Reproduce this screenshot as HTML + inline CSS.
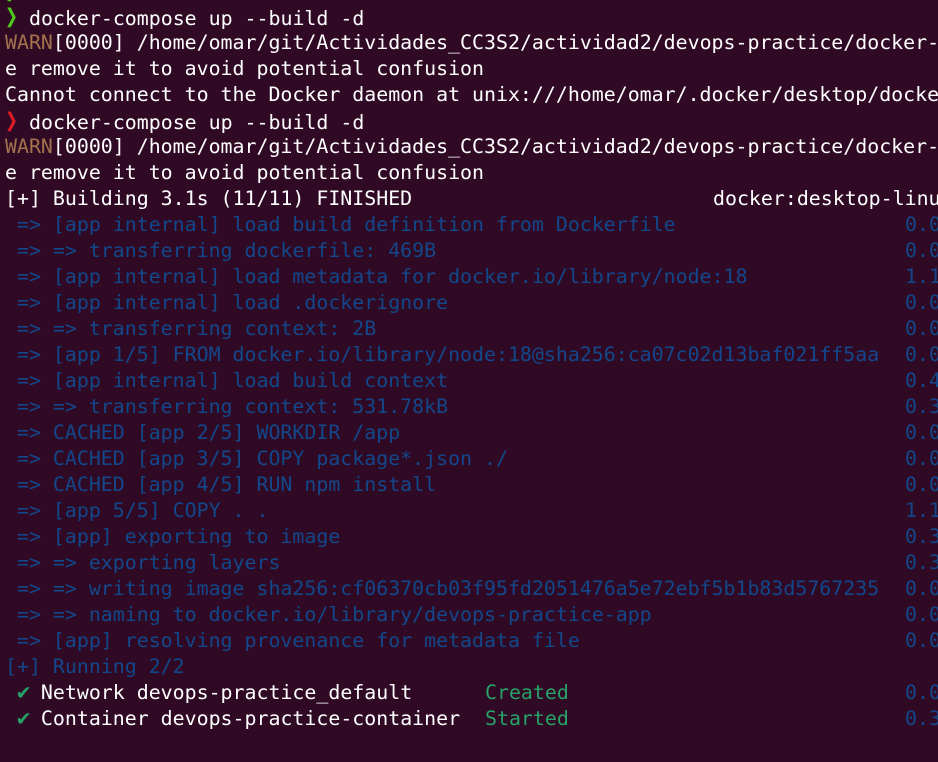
<!DOCTYPE html>
<html><head><meta charset="utf-8"><style>
html,body{margin:0;padding:0;background:#300a24;width:938px;height:762px;overflow:hidden}
.t{position:absolute;left:5px;top:-22px;font-family:"DejaVu Sans Mono","Liberation Mono",monospace;font-size:19.9px;line-height:26px;color:#ffffff}
.l{position:relative;height:26px;white-space:pre}
.r{position:absolute;left:900px}
.b{color:#12488b}
.w{color:#a2734c}
.g{color:#26a269}
.ck{color:#26a269;font-size:22px;font-weight:bold}
.pg,.pr{display:inline-block;width:24px;font-size:27px;font-weight:bold;line-height:26px;transform:scaleX(0.8);transform-origin:left}
.pg{color:#4ec81a}
.pr{color:#e01b24}
</style></head><body>
<div class="t"><div class="l"><span class="pg">❯</span></div><div class="l"><span class="pg">❯</span>docker-compose up --build -d</div><div class="l"><span class="w">WARN</span>[0000] /home/omar/git/Actividades_CC3S2/actividad2/devops-practice/docker-</div><div class="l">e remove it to avoid potential confusion</div><div class="l">Cannot connect to the Docker daemon at unix:///home/omar/.docker/desktop/docke</div><div class="l"><span class="pr">❯</span>docker-compose up --build -d</div><div class="l"><span class="w">WARN</span>[0000] /home/omar/git/Actividades_CC3S2/actividad2/devops-practice/docker-</div><div class="l">e remove it to avoid potential confusion</div><div class="l">[+] Building 3.1s (11/11) FINISHED<span style="position:absolute;left:708px">docker:desktop-linux</span></div><div class="l b"> =&gt; [app internal] load build definition from Dockerfile<span class="r">0.0</span></div><div class="l b"> =&gt; =&gt; transferring dockerfile: 469B<span class="r">0.0</span></div><div class="l b"> =&gt; [app internal] load metadata for docker.io/library/node:18<span class="r">1.1</span></div><div class="l b"> =&gt; [app internal] load .dockerignore<span class="r">0.0</span></div><div class="l b"> =&gt; =&gt; transferring context: 2B<span class="r">0.0</span></div><div class="l b"> =&gt; [app 1/5] FROM docker.io/library/node:18@sha256:ca07c02d13baf021ff5aa<span class="r">0.0</span></div><div class="l b"> =&gt; [app internal] load build context<span class="r">0.4</span></div><div class="l b"> =&gt; =&gt; transferring context: 531.78kB<span class="r">0.3</span></div><div class="l b"> =&gt; CACHED [app 2/5] WORKDIR /app<span class="r">0.0</span></div><div class="l b"> =&gt; CACHED [app 3/5] COPY package*.json ./<span class="r">0.0</span></div><div class="l b"> =&gt; CACHED [app 4/5] RUN npm install<span class="r">0.0</span></div><div class="l b"> =&gt; [app 5/5] COPY . .<span class="r">1.1</span></div><div class="l b"> =&gt; [app] exporting to image<span class="r">0.3</span></div><div class="l b"> =&gt; =&gt; exporting layers<span class="r">0.3</span></div><div class="l b"> =&gt; =&gt; writing image sha256:cf06370cb03f95fd2051476a5e72ebf5b1b83d5767235<span class="r">0.0</span></div><div class="l b"> =&gt; =&gt; naming to docker.io/library/devops-practice-app<span class="r">0.0</span></div><div class="l b"> =&gt; [app] resolving provenance for metadata file<span class="r">0.0</span></div><div class="l b">[+] Running 2/2</div><div class="l"> <span class="ck" style="position:absolute;left:12px">✔</span>  Network devops-practice_default<span class="g" style="position:absolute;left:480px">Created</span><span class="r b">0.0</span></div><div class="l"> <span class="ck" style="position:absolute;left:12px">✔</span>  Container devops-practice-container<span class="g" style="position:absolute;left:480px">Started</span><span class="r b">0.3</span></div></div>
</body></html>
